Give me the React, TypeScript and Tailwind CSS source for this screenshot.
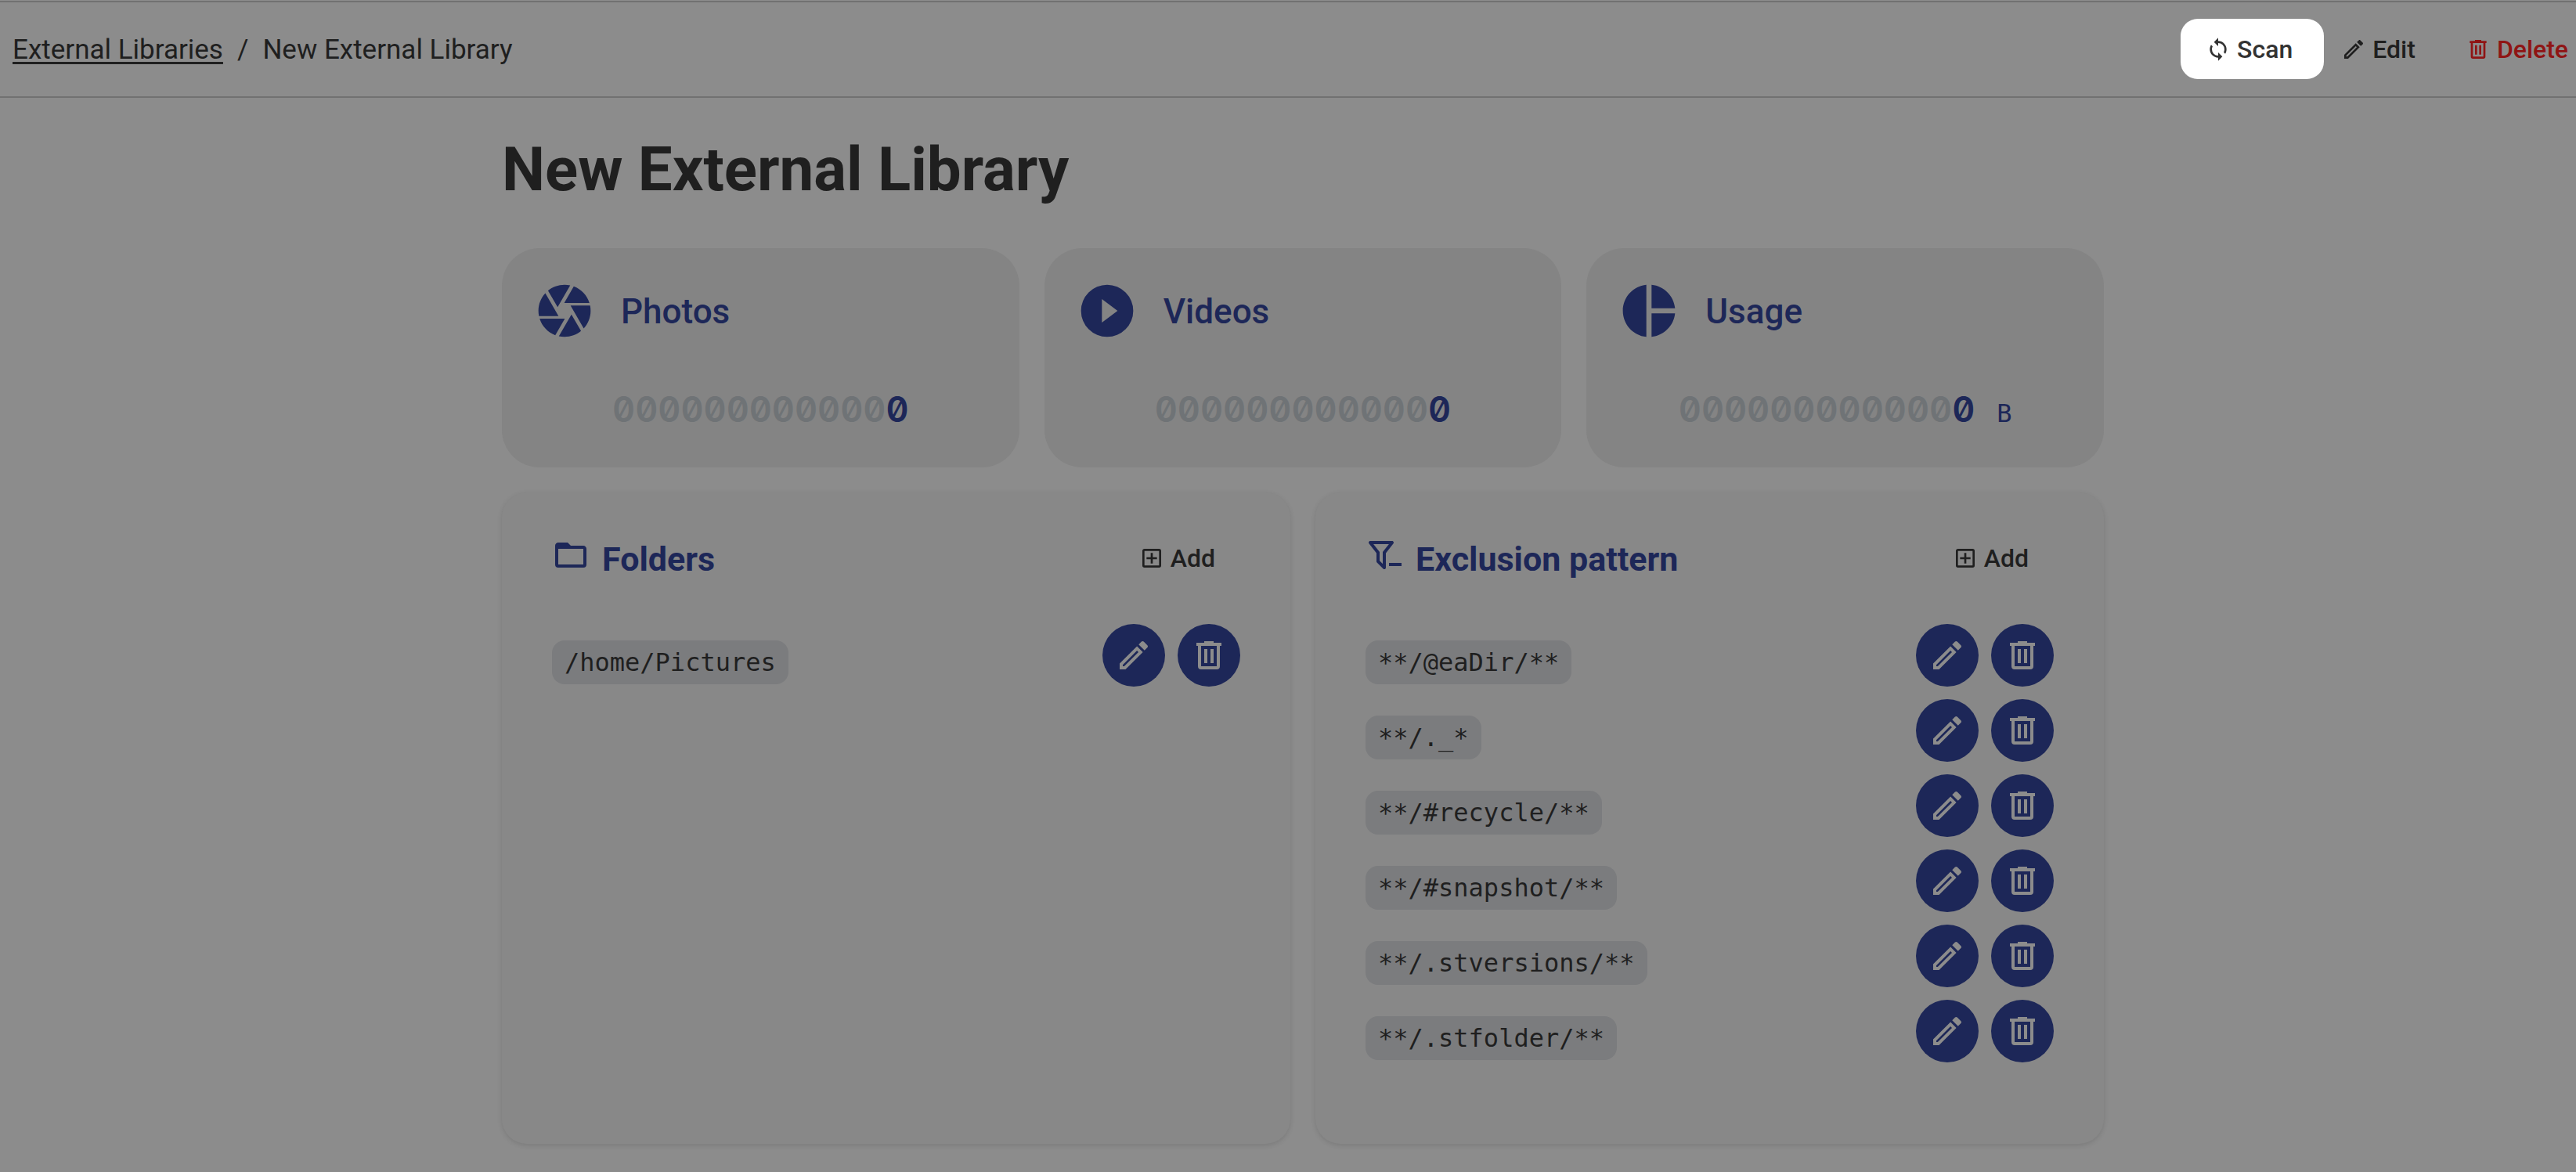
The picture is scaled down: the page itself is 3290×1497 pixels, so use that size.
import React from 'react';

const icons = {
  sync: 'M12,18A6,6 0 0,1 6,12C6,11 6.25,10.03 6.7,9.2L5.24,7.74C4.46,8.97 4,10.43 4,12A8,8 0 0,0 12,20V23L16,19L12,15M12,4V1L8,5L12,9V6A6,6 0 0,1 18,12C18,13 17.75,13.97 17.3,14.8L18.76,16.26C19.54,15.03 20,13.57 20,12A8,8 0 0,0 12,4Z',
  pencil: 'M14.06,9L15,9.94L5.92,19H5V18.08L14.06,9M17.66,3C17.41,3 17.15,3.1 16.96,3.29L15.13,5.12L18.88,8.87L20.71,7.04C21.1,6.65 21.1,6 20.71,5.63L18.37,3.29C18.17,3.09 17.92,3 17.66,3M14.06,6.19L3,17.25V21H6.75L17.81,9.94L14.06,6.19Z',
  trash: 'M9,3V4H4V6H5V19A2,2 0 0,0 7,21H17A2,2 0 0,0 19,19V6H20V4H15V3H9M7,6H17V19H7V6M9,8V17H11V8H9M13,8V17H15V8H13Z',
  plusBox: 'M19,19V5H5V19H19M19,3A2,2 0 0,1 21,5V19A2,2 0 0,1 19,21H5A2,2 0 0,1 3,19V5C3,3.89 3.9,3 5,3H19M11,7H13V11H17V13H13V17H11V13H7V11H11V7Z',
  iris: 'M13.73,15L9.83,21.76C10.53,21.91 11.25,22 12,22C14.4,22 16.6,21.15 18.32,19.75L14.66,13.4M2.46,15C3.38,17.92 5.61,20.26 8.45,21.34L12.12,15M8.54,12L4.64,5.25C3,7 2,9.39 2,12C2,12.68 2.07,13.35 2.2,14H9.69M21.8,10H14.31L14.6,10.5L19.36,18.75C21,16.97 22,14.6 22,12C22,11.31 21.93,10.64 21.8,10M21.54,9C20.62,6.07 18.39,3.74 15.55,2.66L11.88,9M9.4,10.5L14.17,2.24C13.47,2.09 12.75,2 12,2C9.6,2 7.4,2.84 5.68,4.25L9.34,10.6L9.4,10.5Z',
  play: 'M10,16.5V7.5L16,12M12,2A10,10 0 0,0 2,12A10,10 0 0,0 12,22A10,10 0 0,0 22,12A10,10 0 0,0 12,2Z',
  pie: 'M11,2V22C5.9,21.5 2,17.2 2,12C2,6.8 5.9,2.5 11,2M13,2V11H22C21.5,6.2 17.8,2.5 13,2M13,13V22C17.7,21.5 21.5,17.8 22,13H13Z',
  folder: 'M20,18H4V8H20M20,6H12L10,4H4C2.89,4 2,4.89 2,6V18A2,2 0 0,0 4,20H20A2,2 0 0,0 22,18V8C22,6.89 21.1,6 20,6Z',
  filterMinus:
    'M13,19.88C13.04,20.18 12.94,20.5 12.71,20.71C12.32,21.1 11.69,21.1 11.3,20.71L7.29,16.7C7.06,16.47 6.96,16.16 7,15.87V10.75L2.21,4.62C1.87,4.19 1.95,3.56 2.38,3.22C2.57,3.08 2.78,3 3,3H17C17.22,3 17.43,3.08 17.62,3.22C18.05,3.56 18.13,4.19 17.79,4.62L13,10.75V19.88M5.04,5L9,10.06V15.58L11,17.58V10.05L14.96,5H5.04M15,17H23V19H15V17Z',
};

type IconName = keyof typeof icons;

const exclusionPatterns = [
  '**/@eaDir/**',
  '**/._*',
  '**/#recycle/**',
  '**/#snapshot/**',
  '**/.stversions/**',
  '**/.stfolder/**',
];

const Icon = ({ name, className }: { name: IconName; className: string }) => (
  <svg viewBox="0 0 24 24" fill="currentColor" aria-hidden="true" className={`shrink-0 ${className}`}>
    <path d={icons[name]} />
  </svg>
);

const StatCard = ({ icon, title, unit }: { icon: IconName; title: string; unit?: string }) => (
  <div className="flex h-[280px] flex-col justify-between rounded-[48px] bg-[#848484] p-10 text-[#1d2758]">
    <div className="flex items-center gap-8">
      <Icon name={icon} className="size-20" />
      <h2 className="pt-0.5 text-[44px] font-medium">{title}</h2>
    </div>
    <div className="flex items-baseline justify-center gap-7">
      <span className="font-[Inter,sans-serif] text-[45px] leading-[68px] font-semibold slashed-zero tabular-nums">
        <span className="text-[#6f7376]">000000000000</span>0
      </span>
      {unit && <span className="font-['DejaVu_Sans_Mono',monospace] text-[32px]">{unit}</span>}
    </div>
  </div>
);

const RoundButton = ({ icon, label }: { icon: IconName; label: string }) => (
  <button type="button" aria-label={label} className="flex size-20 items-center justify-center rounded-full bg-[#1d2758] text-[#8c8c8c]">
    <Icon name={icon} className="size-12" />
  </button>
);

const Panel = ({ icon, title, items }: { icon: IconName; title: string; items: string[] }) => (
  <section className="rounded-[32px] bg-[#888888] px-16 pt-[52px] pb-[104px] shadow-[0_2px_6px_rgba(0,0,0,0.12)]">
    <div className="flex h-16 items-center justify-between">
      <div className="flex items-center gap-4 text-[#1d2758]">
        <Icon name={icon} className="mb-2 size-12" />
        <h2 className="pt-0.5 text-[43px] font-bold">{title}</h2>
      </div>
      <button type="button" className="flex items-center gap-2 px-8 text-[32px] font-medium">
        <Icon name="plusBox" className="size-8" />
        Add
      </button>
    </div>
    <ul className="mt-[52px] space-y-4">
      {items.map((item) => (
        <li key={item} className="flex items-center justify-between">
          <code className="mt-[18px] rounded-2xl bg-[#7b7c7e] px-4 font-['DejaVu_Sans_Mono',monospace] text-[32px] leading-[56px]">
            {item}
          </code>
          <div className="flex gap-4">
            <RoundButton icon="pencil" label={`Edit ${item}`} />
            <RoundButton icon="trash" label={`Delete ${item}`} />
          </div>
        </li>
      ))}
    </ul>
  </section>
);

const App: React.FC = () => {
  return (
    <div className="min-h-screen bg-[#8c8c8c] pt-px font-[Roboto,sans-serif] text-[#1f1f1f]">
      {/* Top bar */}
      <header className="flex h-[124px] items-center justify-between border-y-2 border-[#717171] pl-4">
        <nav aria-label="Breadcrumb" className="flex items-center gap-[18px] pt-0.5 text-[35px]">
          <a href="#" className="underline decoration-3 underline-offset-4">External Libraries</a>
          <span>/</span>
          <span>New External Library</span>
        </nav>
        <div className="flex items-center text-[32px] font-medium">
          <button type="button" className="mb-0.5 flex h-[77px] items-center gap-2 rounded-[22px] bg-white pt-0.5 pr-10 pl-8 text-[#333333]">
            <Icon name="sync" className="size-8" />
            Scan
          </button>
          <button type="button" className="flex items-center gap-2 pr-8 pl-[22px]">
            <Icon name="pencil" className="size-8" />
            Edit
          </button>
          <button type="button" className="flex items-center gap-2 pr-[10px] pl-8 text-[#8f1414]">
            <Icon name="trash" className="size-8" />
            Delete
          </button>
        </div>
      </header>

      {/* Library details */}
      <main className="pl-[38px]">
        <div className="mx-auto max-w-[2046px]">
          <h1 className="pt-8 pb-10 text-[78px] leading-[120px] font-bold">New External Library</h1>
          <div className="grid grid-cols-3 gap-8">
            <StatCard icon="iris" title="Photos" />
            <StatCard icon="play" title="Videos" />
            <StatCard icon="pie" title="Usage" unit="B" />
          </div>
          <div className="mt-8 grid grid-cols-2 gap-8">
            <Panel icon="folder" title="Folders" items={['/home/Pictures']} />
            <Panel icon="filterMinus" title="Exclusion pattern" items={exclusionPatterns} />
          </div>
        </div>
      </main>
    </div>
  );
};

export default App;
